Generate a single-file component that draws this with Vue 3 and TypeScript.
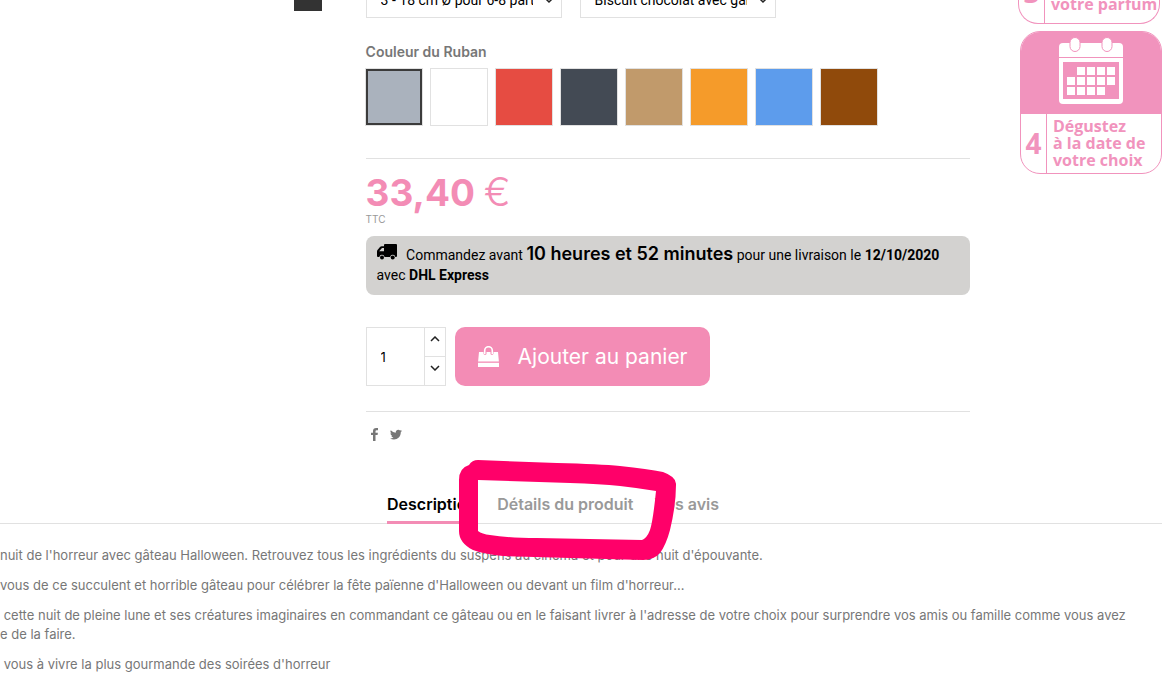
<script setup lang="ts">
import { ref } from 'vue'

interface Ribbon {
  name: string
  key: string
}

const ribbons: Ribbon[] = [
  { name: 'Gris', key: 'grey' },
  { name: 'Blanc', key: 'white' },
  { name: 'Rouge', key: 'red' },
  { name: 'Anthracite', key: 'slate' },
  { name: 'Camel', key: 'camel' },
  { name: 'Orange', key: 'orange' },
  { name: 'Bleu', key: 'blue' },
  { name: 'Marron', key: 'brown' },
]

const ribbon = ref('grey')
const quantity = ref('1')

function step(delta: number) {
  quantity.value = String(Math.max(1, (parseInt(quantity.value, 10) || 1) + delta))
}
</script>

<template>
  <div class="page">
    <div class="product">
      <div class="gallery"><div class="thumb"></div></div>

      <main class="info">
        <div class="selects">
          <div class="select">
            <select aria-label="Taille">
              <option>3 - 18 cm Ø pour 6-8 parts</option>
            </select>
            <svg viewBox="0 0 10 6"><path d="M2 1l3 3 3-3" /></svg>
          </div>
          <div class="select">
            <select aria-label="Parfum">
              <option>Biscuit chocolat avec ganache</option>
            </select>
            <svg viewBox="0 0 10 6"><path d="M2 1l3 3 3-3" /></svg>
          </div>
        </div>

        <fieldset class="ribbons">
          <legend>Couleur du Ruban</legend>
          <div class="swatches">
            <input
              v-for="r in ribbons"
              :key="r.key"
              v-model="ribbon"
              type="radio"
              name="ribbon"
              :value="r.key"
              :aria-label="r.name"
              :class="['swatch', r.key]"
            />
          </div>
        </fieldset>

        <div class="price">33,40 <span>€</span></div>
        <div class="tax">TTC</div>

        <p class="delivery">
          <svg class="truck" viewBox="0 0 20 16">
            <path d="M8 0h11q1 0 1 1v11q0 1-1 1h-.6a2.700 2.700 0 0 0-5.300 0H7.600a2.700 2.700 0 0 0-5.300 0H1q-1 0-1-1V7.500q0-1 .7-1.700L3 3q.7-.8 1.700-.8H7V1q0-1 1-1zM5 4 2.200 7.300H7V4z" fill-rule="evenodd" />
            <circle cx="5" cy="13.400" r="2" />
            <circle cx="15.700" cy="13.400" r="2" />
          </svg>
          Commandez avant <strong class="countdown">10 heures et 52 minutes</strong> pour une livraison le
          <strong>12/10/2020</strong><br />avec <strong>DHL Express</strong>
        </p>

        <div class="buy">
          <div class="quantity">
            <input v-model="quantity" type="text" aria-label="Quantité" />
            <div class="steppers">
              <button type="button" aria-label="Augmenter" @click="step(1)">
                <svg viewBox="0 0 10 6"><path d="M1 5l4-4 4 4" /></svg>
              </button>
              <button type="button" aria-label="Diminuer" @click="step(-1)">
                <svg viewBox="0 0 10 6"><path d="M1 1l4 4 4-4" /></svg>
              </button>
            </div>
          </div>
          <button type="button" class="add">
            <svg viewBox="0 0 22 22">
              <path d="M1.500 6H6v1.500a1.600 1.600 0 0 0 3 .5V6h4v2a1.600 1.600 0 0 0 3-.5V6h4.500l.9 9.500H.6z" />
              <path d="M.5 16.800h21V21H.5z" />
              <path class="handle" d="M7.200 8V4.500a3.800 3.800 0 0 1 7.600 0V8" />
            </svg>
            Ajouter au panier
          </button>
        </div>

        <div class="social">
          <a href="#facebook" aria-label="Facebook">
            <svg viewBox="0 0 12 13"><path d="M10 .1V2.200H8.700Q7.500 2.200 7.500 3.300V4.800H9.900L9.600 7H7.500v6H5V7H3V4.800h2V3.100Q5 0 8.200 0q1.200 0 1.800.1z" /></svg>
          </a>
          <a href="#twitter" aria-label="Twitter">
            <svg viewBox="0 0 12 13"><path d="M12 2.700q-.5.7-1.200 1.200C11 8.500 7.800 11.500 4 11.500q-2.200 0-4-1.100 2 .1 3.500-1Q1.800 9.200 1.200 7.700h1.100Q.4 7 .4 5.200l1.100.3Q-.3 4 .8 2.200q2 2.400 5 2.600C5.300 1.700 8.600.8 10.100 2.500l1.500-.6q-.2.900-1 1.300z" /></svg>
          </a>
        </div>
      </main>

      <aside class="steps">
        <div class="card previous">
          <div class="number">3</div>
          <div class="caption">votre parfum</div>
        </div>
        <div class="card current">
          <div class="picture">
            <svg viewBox="0 0 66 68">
              <rect x="1" y="6" width="64" height="61" rx="4" fill="#fff" />
              <path d="M1 20.500h64" stroke="#f193bd" />
              <path d="M5 25h56v37H5z" fill="#f193bd" />
              <g fill="#fff" stroke="#f193bd">
                <rect x="12" y=".5" width="10" height="14" rx="5" />
                <rect x="44" y=".5" width="10" height="14" rx="5" />
              </g>
              <path
                fill="#fff"
                d="M19 30h8v8h-8zM29 30h8v8h-8zM39 30h8v8h-8zM49 30h8v8h-8zM9 40h8v8H9zM19 40h8v8h-8zM29 40h8v8h-8zM39 40h8v8h-8zM49 40h8v8h-8zM9 50h8v8H9zM19 50h8v8h-8zM29 50h8v8h-8zM39 50h8v8h-8z"
              />
            </svg>
          </div>
          <div class="number">4</div>
          <div class="caption">Dégustez<br />à la date de<br />votre choix</div>
        </div>
      </aside>
    </div>

    <nav class="tabs">
      <a href="#description" class="active">Description</a>
      <a href="#details">
        Détails du produit
        <svg class="marker" viewBox="0 0 220 103">
          <path
            fill-rule="evenodd"
            d="M1 21Q1 9 11 6Q14 1 20 1L99 4Q142 5 162 7Q190 10 205 13Q219 18 218 26Q218 46 212 71Q208 86 202 94Q196 101 185 101L112 99L45 97Q26 95 15 91Q1 84 1 72ZM20 21V72Q24 75 32 76Q50 79 79 79L184 81Q189 79 192 71Q195 62 198 32Q180 29 162 27Q142 25 112 24Z"
          />
        </svg>
      </a>
      <a href="#avis">Vos avis</a>
    </nav>

    <section class="description">
      <p>nuit de l'horreur avec gâteau Halloween. Retrouvez tous les ingrédients du suspens au cinéma et pour une nuit d'épouvante.</p>
      <p>vous de ce succulent et horrible gâteau pour célébrer la fête païenne d'Halloween ou devant un film d'horreur…</p>
      <p>&nbsp;cette nuit de pleine lune et ses créatures imaginaires en commandant ce gâteau ou en le faisant livrer à l'adresse de votre choix pour surprendre vos amis ou famille comme vous avez<br />e de la faire.</p>
      <p>&nbsp;vous à vivre la plus gourmande des soirées d'horreur</p>
    </section>
  </div>
</template>

<style>
body {
  margin: 0;
  background: #fff;
}
</style>

<style scoped>
.page {
  overflow: hidden;
  font: 14px/20px Inter, "Liberation Sans", sans-serif;
  color: #777;
}
.page * {
  box-sizing: border-box;
}
.product {
  display: grid;
  grid-template-columns: 366fr 605fr 191fr;
}
.gallery {
  display: flex;
  justify-content: flex-end;
  padding-right: 44px;
}
.thumb {
  width: 28px;
  height: 11px;
  background: #333;
}
.info {
  min-width: 0;
}
.selects {
  display: flex;
  align-items: flex-end;
  gap: 18px;
  height: 18px;
}
.select {
  position: relative;
  width: 196px;
}
select {
  display: block;
  width: 100%;
  height: 36px;
  padding: 0 28px 0 14px;
  border: 1px solid #e1e1e1;
  border-radius: 0;
  background: #fff;
  color: #000;
  font: 14px/20px Roboto, "Liberation Sans", sans-serif;
  appearance: none;
}
.select svg {
  position: absolute;
  right: 8px;
  bottom: 14px;
  width: 10px;
  height: 6px;
}
.select path,
.steppers path {
  fill: none;
  stroke: #222;
  stroke-width: 1.5;
}
.ribbons {
  margin: 24px 0 0;
  padding: 0 0 33px;
  border: 0;
  border-bottom: 1px solid #e1e1e1;
}
legend {
  padding: 0;
  font-size: 14px;
  font-weight: 600;
}
.swatches {
  display: flex;
  gap: 9px;
  padding-top: 7px;
}
.swatch {
  width: 56px;
  height: 56px;
  margin: 0;
  box-shadow: 0 0 0 1px #e1e1e1;
  appearance: none;
}
.swatch:checked {
  border: 2px solid #3b3b3b;
}
.grey { background: #aab2bd; }
.white { background: #fff; }
.red { background: #e64c42; }
.slate { background: #434a54; }
.camel { background: #c19a6b; }
.orange { background: #f59b2a; }
.blue { background: #5d9cec; }
.brown { background: #904a0b; }
.price {
  padding-top: 14px;
  color: #f38cb5;
  font-size: 37px;
  font-weight: 700;
  line-height: 40px;
}
.price span {
  font-size: 40px;
  font-weight: 300;
  line-height: 32px;
}
.tax {
  color: #999;
  font-size: 10px;
  line-height: 12px;
}
.delivery {
  margin: 11px 0 0;
  padding: 8px 11px 10px;
  border-radius: 8px;
  background: #d3d2d0;
  color: #000;
  font: 14px/20px Roboto, "Liberation Sans", sans-serif;
}
.truck {
  width: 20px;
  height: 16px;
  margin-right: 6px;
}
.countdown {
  font-family: Inter, "Liberation Sans", sans-serif;
  font-size: 18px;
  font-weight: 600;
}
.buy {
  display: flex;
  gap: 9px;
  padding: 32px 0 25px;
  border-bottom: 1px solid #e1e1e1;
}
.quantity {
  display: flex;
  width: 80px;
  height: 59px;
  border: 1px solid #e1e1e1;
}
.quantity input {
  flex: 1;
  min-width: 0;
  padding: 0 14px;
  border: 0;
  background: none;
  color: #000;
  font: inherit;
  font-size: 13px;
}
.steppers {
  display: flex;
  flex-direction: column;
  width: 21px;
  border-left: 1px solid #e1e1e1;
}
.steppers button {
  flex: 1;
  padding: 0 0 6px;
  border: 0;
  background: none;
  line-height: 0;
}
.steppers button + button {
  border-top: 1px solid #e1e1e1;
}
.steppers svg {
  width: 10px;
  height: 6px;
}
.add {
  display: flex;
  align-items: center;
  gap: 18px;
  height: 59px;
  padding: 0 22px;
  border: 0;
  border-radius: 10px;
  background: #f38cb5;
  color: #fff;
  font: inherit;
  font-size: 21px;
}
.add svg {
  width: 23px;
  height: 22px;
  fill: #fff;
}
.add .handle {
  fill: none;
  stroke: #fff;
  stroke-width: 1.6;
}
.social {
  display: flex;
  gap: 10px;
  padding: 16px 2px 0;
}
.social svg {
  display: block;
  width: 12px;
  height: 13px;
  fill: #777;
}
.steps {
  display: flex;
  flex-direction: column;
  align-items: flex-start;
  gap: 7px;
  padding-left: 50px;
  color: #f193bd;
  font: 700 17px/17px "Open Sans", "Noto Sans", sans-serif;
}
.card {
  display: grid;
  grid-template-columns: 26px 1fr;
  flex: none;
  width: 142px;
  border: 1px solid #f193bd;
  border-radius: 20px;
  overflow: hidden;
  white-space: nowrap;
}
.previous {
  grid-template-rows: 23px;
  height: 24px;
  margin-left: -2px;
  border-top: 0;
  border-radius: 0 0 20px 20px;
}
.picture {
  display: flex;
  grid-column: 1 / 3;
  justify-content: center;
  height: 82px;
  padding-top: 5px;
  background: #f193bd;
}
.picture svg {
  width: 66px;
  height: 68px;
}
.number {
  display: flex;
  align-items: center;
  justify-content: center;
  border-right: 1px solid #f193bd;
  font-size: 28px;
}
.caption {
  padding: 4px 0 4px 6px;
  font-size: 16px;
}
.previous .number {
  align-items: flex-end;
  padding-bottom: 14px;
  line-height: 34px;
}
.previous .caption {
  padding: 0 0 0 6px;
  line-height: 8px;
}
.tabs {
  display: flex;
  gap: 21px;
  margin-top: 51px;
  padding-left: 387px;
  border-bottom: 1px solid #e1e1e1;
  font-size: 16px;
  font-weight: 600;
}
.tabs a {
  position: relative;
  padding: 2px 0 9px;
  color: #999;
  text-decoration: none;
  white-space: nowrap;
}
.tabs .active {
  color: #000;
  box-shadow: 0 1px #f38cb5, inset 0 -2px #f38cb5;
}
.marker {
  position: absolute;
  z-index: 1;
  top: -33px;
  left: -39px;
  width: 220px;
  height: 103px;
  fill: #ff0069;
}
.description {
  padding: 22px 0 7px;
  font-size: 13px;
  line-height: 19px;
  white-space: nowrap;
}
.description p {
  margin: 0 0 11px;
}
</style>
